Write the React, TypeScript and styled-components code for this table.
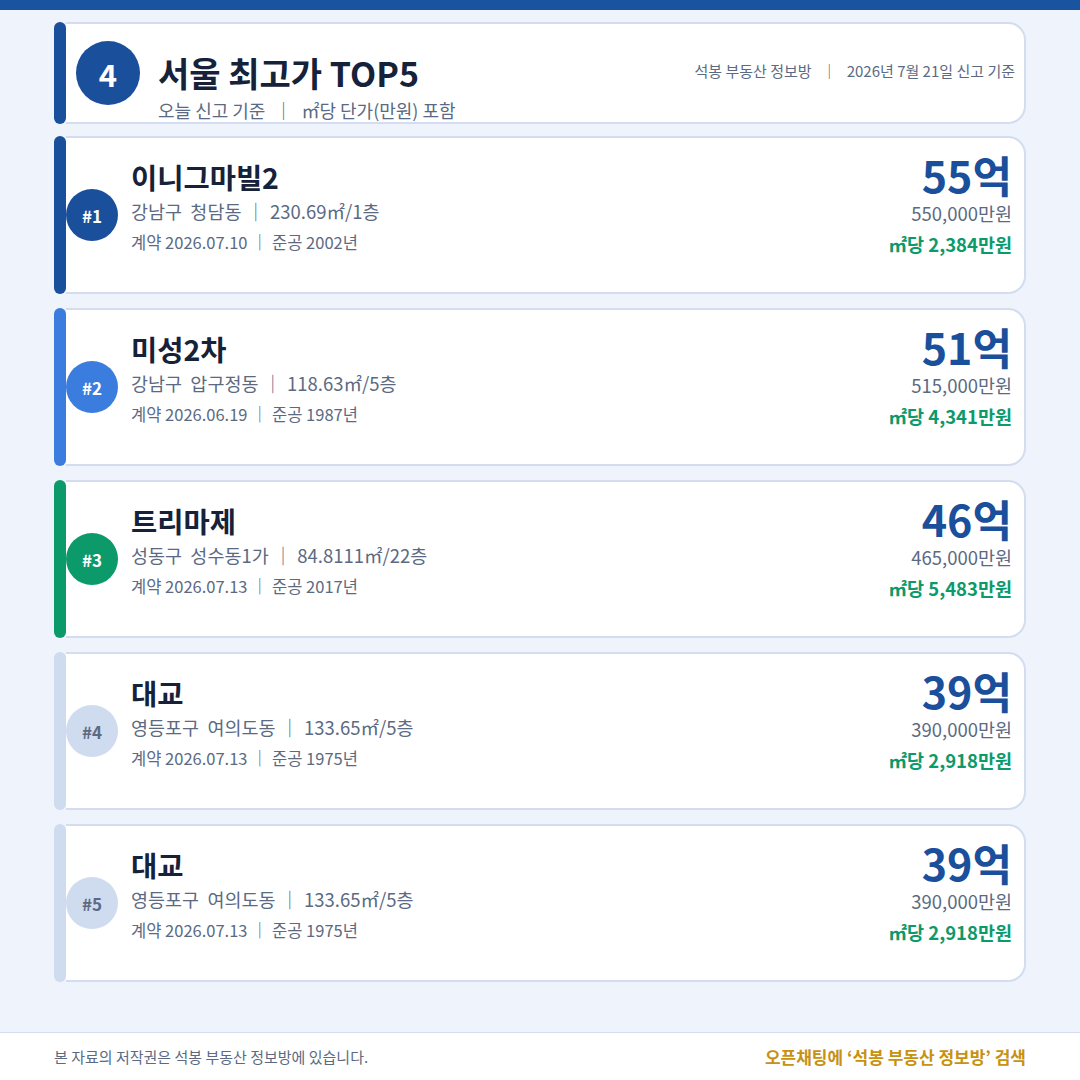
import React from 'react'
import styled, { createGlobalStyle } from 'styled-components'

const GlobalStyle = createGlobalStyle`
    html, body {
        margin: 0;
        padding: 0;
    }
    body {
        font-family: 'Noto Sans CJK KR', 'Noto Sans', sans-serif;
        background: #eef3fc;
    }
`

const COLORS = {
    navy: '#1a4f9c',
    blue: '#3a7ddf',
    green: '#0c9a6b',
    pale: '#cfdbee',
    text: '#16213a',
    muted: '#5b6a82',
    line: '#d3ddef'
}

interface IDeal {
    rank: number
    name: string
    gu: string
    dong: string
    area: string
    floor: string
    contract: string
    built: string
    eok: number
    manwon: string
    perSqm: string
    accent: string
    badgeText: string
}

const deals: IDeal[] = [
    {
        rank: 1,
        name: '이니그마빌2',
        gu: '강남구',
        dong: '청담동',
        area: '230.69',
        floor: '1층',
        contract: '2026.07.10',
        built: '2002년',
        eok: 55,
        manwon: '550,000',
        perSqm: '2,384',
        accent: COLORS.navy,
        badgeText: '#ffffff'
    },
    {
        rank: 2,
        name: '미성2차',
        gu: '강남구',
        dong: '압구정동',
        area: '118.63',
        floor: '5층',
        contract: '2026.06.19',
        built: '1987년',
        eok: 51,
        manwon: '515,000',
        perSqm: '4,341',
        accent: COLORS.blue,
        badgeText: '#ffffff'
    },
    {
        rank: 3,
        name: '트리마제',
        gu: '성동구',
        dong: '성수동1가',
        area: '84.8111',
        floor: '22층',
        contract: '2026.07.13',
        built: '2017년',
        eok: 46,
        manwon: '465,000',
        perSqm: '5,483',
        accent: COLORS.green,
        badgeText: '#ffffff'
    },
    {
        rank: 4,
        name: '대교',
        gu: '영등포구',
        dong: '여의도동',
        area: '133.65',
        floor: '5층',
        contract: '2026.07.13',
        built: '1975년',
        eok: 39,
        manwon: '390,000',
        perSqm: '2,918',
        accent: COLORS.pale,
        badgeText: COLORS.muted
    },
    {
        rank: 5,
        name: '대교',
        gu: '영등포구',
        dong: '여의도동',
        area: '133.65',
        floor: '5층',
        contract: '2026.07.13',
        built: '1975년',
        eok: 39,
        manwon: '390,000',
        perSqm: '2,918',
        accent: COLORS.pale,
        badgeText: COLORS.muted
    }
]

const App = function (): JSX.Element {
    return (
        <Page>
            <GlobalStyle />
            <TopStrip />
            <Main>
                <HeaderRow>
                    <AccentBar $color={COLORS.navy} />
                    <HeaderCard>
                        <IssueBadge>4</IssueBadge>
                        <HeaderText>
                            <Title>서울 최고가 TOP5</Title>
                            <Subtitle>
                                오늘 신고 기준<Sep $gap={9}>｜</Sep>㎡당 단가(만원) 포함
                            </Subtitle>
                        </HeaderText>
                        <Source>
                            석봉 부동산 정보방<Sep $gap={10}>｜</Sep>2026년 7월 21일 신고 기준
                        </Source>
                    </HeaderCard>
                </HeaderRow>
                {deals.map(deal => (
                    <DealRow key={deal.rank}>
                        <AccentBar $color={deal.accent} />
                        <DealCard>
                            <RankBadge $bg={deal.accent} $fg={deal.badgeText}>
                                #{deal.rank}
                            </RankBadge>
                            <DealInfo>
                                <DealName>{deal.name}</DealName>
                                <Location>
                                    {deal.gu}
                                    {'  '}
                                    {deal.dong}
                                    <Sep $gap={5}>｜</Sep>
                                    {deal.area}㎡/{deal.floor}
                                </Location>
                                <Dates>
                                    계약 {deal.contract}
                                    <Sep $gap={4}>｜</Sep>준공 {deal.built}
                                </Dates>
                            </DealInfo>
                            <PriceBox>
                                <Eok>{deal.eok}억</Eok>
                                <Manwon>{deal.manwon}만원</Manwon>
                                <PerSqm>㎡당 {deal.perSqm}만원</PerSqm>
                            </PriceBox>
                        </DealCard>
                    </DealRow>
                ))}
            </Main>
            <Footer>
                <Copyright>본 자료의 저작권은 석봉 부동산 정보방에 있습니다.</Copyright>
                <Promo>오픈채팅에 ‘석봉 부동산 정보방’ 검색</Promo>
            </Footer>
        </Page>
    )
}

export default App

const Page = styled.div`
    width: 1080px;
    height: 1080px;
    display: flex;
    flex-direction: column;
    background: #eef3fc;
    overflow: hidden;
`

const TopStrip = styled.div`
    height: 10px;
    flex-shrink: 0;
    background: #1a53a0;
`

const Main = styled.main`
    flex: 1;
    padding: 12px 54px 0;
    display: flex;
    flex-direction: column;
`

const HeaderRow = styled.section`
    display: flex;
    height: 102px;
    margin-bottom: 12px;
`

const DealRow = styled.article`
    display: flex;
    height: 158px;
    margin-bottom: 14px;
`

const AccentBar = styled.div<{ $color: string }>`
    width: 12px;
    flex-shrink: 0;
    border-radius: 6px;
    background: ${props => props.$color};
`

const Sep = styled.span<{ $gap: number }>`
    display: inline-block;
    margin: 0 ${props => props.$gap}px;
    color: ${COLORS.muted};
`

const HeaderCard = styled.div`
    flex: 1;
    display: flex;
    align-items: flex-start;
    background: #ffffff;
    border: 2px solid ${COLORS.line};
    border-left: none;
    border-radius: 0 18px 18px 0;
    padding: 0 9px 0 10px;
`

const IssueBadge = styled.div`
    width: 64px;
    height: 64px;
    align-self: center;
    flex-shrink: 0;
    border-radius: 50%;
    background: ${COLORS.navy};
    color: #ffffff;
    font-size: 31px;
    font-weight: 700;
    display: flex;
    align-items: center;
    justify-content: center;
`

const HeaderText = styled.div`
    margin-left: 18px;
    padding-top: 29px;
    flex: 1;
`

const Title = styled.h1`
    margin: 0;
    font-size: 34px;
    line-height: 40px;
    font-weight: 700;
    color: ${COLORS.text};
`

const Subtitle = styled.p`
    margin: 5px 0 0;
    font-size: 18px;
    line-height: 24px;
    color: ${COLORS.muted};
`

const Source = styled.p`
    margin: 0;
    padding-top: 36px;
    font-size: 15px;
    line-height: 22px;
    color: ${COLORS.muted};
`

const DealCard = styled.div`
    flex: 1;
    display: flex;
    align-items: flex-start;
    background: #ffffff;
    border: 2px solid ${COLORS.line};
    border-left: none;
    border-radius: 0 18px 18px 0;
    padding-right: 12px;
`

const RankBadge = styled.div<{ $bg: string; $fg: string }>`
    width: 52px;
    height: 52px;
    align-self: center;
    flex-shrink: 0;
    border-radius: 50%;
    background: ${props => props.$bg};
    color: ${props => props.$fg};
    font-size: 17px;
    font-weight: 700;
    display: flex;
    align-items: center;
    justify-content: center;
`

const DealInfo = styled.div`
    flex: 1;
    margin-left: 13px;
    padding-top: 22px;
`

const DealName = styled.h2`
    margin: 0;
    font-size: 28.5px;
    line-height: 34px;
    font-weight: 700;
    color: ${COLORS.text};
`

const Location = styled.p`
    margin: 4px 0 0;
    font-size: 18.5px;
    line-height: 26px;
    color: ${COLORS.muted};
    white-space: pre;
`

const Dates = styled.p`
    margin: 6px 0 0;
    font-size: 16.5px;
    line-height: 24px;
    color: ${COLORS.muted};
`

const PriceBox = styled.div`
    padding-top: 12px;
    display: flex;
    flex-direction: column;
    align-items: flex-end;
`

const Eok = styled.div`
    font-size: 43px;
    line-height: 48px;
    font-weight: 700;
    color: ${COLORS.navy};
`

const Manwon = styled.div`
    margin-top: 2px;
    font-size: 18.5px;
    line-height: 26px;
    color: ${COLORS.muted};
`

const PerSqm = styled.div`
    margin-top: 6px;
    font-size: 18.5px;
    line-height: 24px;
    font-weight: 700;
    color: ${COLORS.green};
`

const Footer = styled.footer`
    height: 47px;
    flex-shrink: 0;
    border-top: 1px solid ${COLORS.line};
    background: #ffffff;
    padding: 0 54px;
    display: flex;
    align-items: center;
    justify-content: space-between;
`

const Copyright = styled.span`
    font-size: 15px;
    color: ${COLORS.muted};
`

const Promo = styled.span`
    font-size: 17px;
    font-weight: 700;
    color: #c8910f;
`
